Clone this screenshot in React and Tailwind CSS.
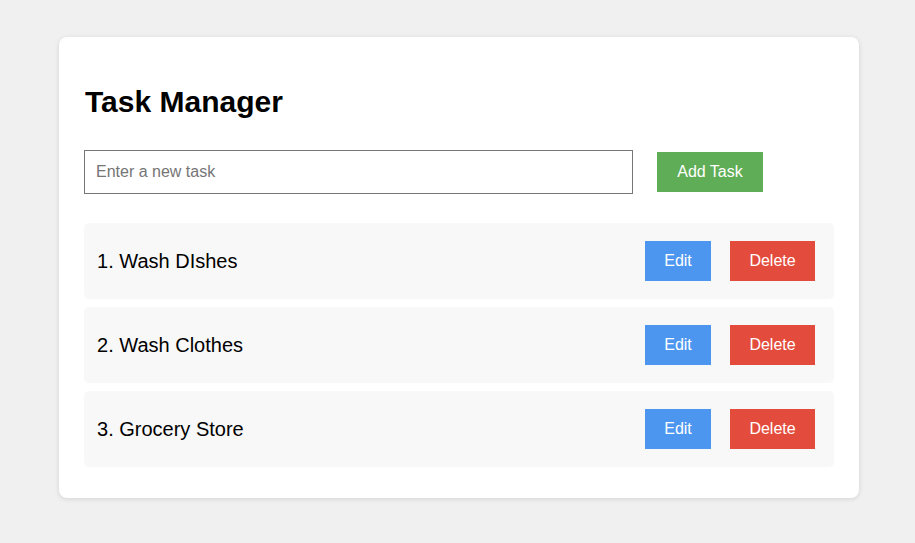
export default function App() {
  const tasks = ["Wash DIshes", "Wash Clothes", "Grocery Store"];
  return (
    <div className="min-h-[543px] w-full bg-[#f0f0f0] pt-[37px] pb-[45px]" style={{ fontFamily: '"Liberation Sans", Arial, sans-serif' }}>
      <div className="ml-[59px] w-[800px] rounded-[8px] bg-white px-[25px] pt-[46px] pb-[31px] shadow-[0_1px_5px_rgba(0,0,0,0.12)]">
        <h1 className="pl-[1px] text-[30px] font-bold leading-[37px] text-black">Task Manager</h1>
        <div className="mt-[30px] flex items-center">
          <input
            type="text"
            placeholder="Enter a new task"
            className="h-[44px] w-[549px] border border-[#767676] bg-white px-[11px] text-[16px] text-black placeholder-[#757575] outline-none"
          />
          <button className="ml-[24px] h-[40px] w-[106px] bg-[#5fad56] text-[16px] text-white">Add Task</button>
        </div>
        <div className="mt-[29px] flex flex-col gap-[8px]">
          {tasks.map((t, i) => (
            <div key={t} className="flex h-[76px] items-center rounded-[5px] bg-[#f8f8f8] pl-[13px] pr-[19px]">
              <span className="flex-1 text-[20px] text-black">
                {i + 1}. {t}
              </span>
              <button className="h-[40px] w-[66px] bg-[#4d96ef] text-[16px] text-white">Edit</button>
              <button className="ml-[19px] h-[40px] w-[85px] bg-[#e34c3c] text-[16px] text-white">Delete</button>
            </div>
          ))}
        </div>
      </div>
    </div>
  );
}
